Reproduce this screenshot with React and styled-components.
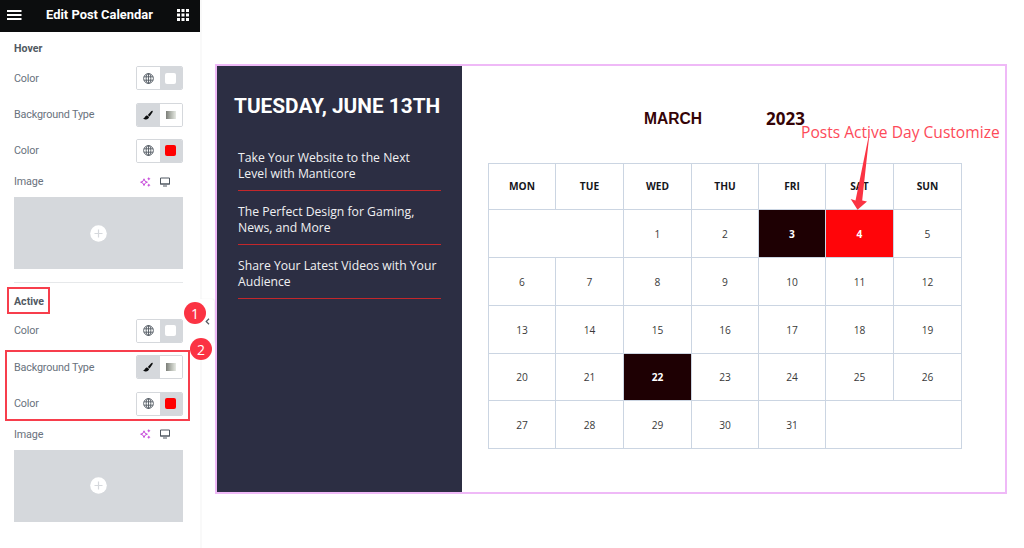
import styled, { createGlobalStyle } from "styled-components";

const GlobalStyle = createGlobalStyle`
	* {
		box-sizing: border-box;
	}

	body {
		margin: 0;
		background: #fff;
		font-family: Roboto, "Liberation Sans", sans-serif;
	}

	svg {
		display: block;
		flex: none;
	}
`;

const Page = styled.div`
	position: relative;
	display: flex;
	width: 1024px;
	height: 548px;
	overflow: hidden;
	background: #fff;
`;

const Sidebar = styled.aside`
	width: 200px;
	height: 100%;
	background: #fff;
`;

const TopBar = styled.header`
	display: flex;
	align-items: center;
	justify-content: space-between;
	height: 32px;
	padding: 0 11px 3px 7px;
	background: #0c0d0e;
	color: #fff;

	h1 {
		margin: 0;
		font-size: 12.9px;
		font-weight: 700;
		line-height: 16px;
	}
`;

const Section = styled.section`
	height: 252px;
	margin: 0 17px 0 14px;
	padding-top: 4px;

	& + & {
		margin-top: -2px;
		height: 254px;
		padding-top: 5.6px;
		border-top: 1px solid #e6e8ea;
	}
`;

const SectionTitle = styled.h2`
	margin: 0;
	height: 24px;
	font-size: 10.6px;
	font-weight: 700;
	line-height: 25px;
	color: #515962;
`;

const Control = styled.div`
	display: flex;
	align-items: center;
	justify-content: space-between;
	height: ${({ $short }) => ($short ? "25px" : "36.4px")};
	margin-bottom: ${({ $short }) => ($short ? "3px" : "0")};
	font-size: 10.8px;
	letter-spacing: -0.17px;
	color: #69727d;
`;

const Choices = styled.div`
	display: flex;
	width: 47px;
	height: 24px;
	border: 1px solid #d5d8dc;
	border-radius: 2px;
	overflow: hidden;
`;

const Choice = styled.span`
	display: flex;
	flex: 1;
	align-items: center;
	justify-content: center;
	background: ${({ $active }) => ($active ? "#d5d8dc" : "#fff")};
`;

const Swatch = styled.i`
	width: 11px;
	height: 11px;
	border-radius: 2px;
	background: ${({ $color }) => $color};
`;

const Gradient = styled.i`
	width: 10px;
	height: 8px;
	background: linear-gradient(to right, #7b7d78, #b4b8b0 50%, #e6e9e3);
`;

const Tools = styled.div`
	display: flex;
	align-items: center;
	gap: 9px;
	margin-right: 13px;
`;

const ImagePicker = styled.div`
	display: flex;
	align-items: center;
	justify-content: center;
	height: 72px;
	background: #d5d8dc;
`;

const Canvas = styled.main`
	flex: 1;
	padding: 64px 17px 0 13px;
	border-left: 2px solid #f9f9f9;
`;

const Widget = styled.div`
	display: flex;
	width: 792px;
	height: 430px;
	border: 2px solid #efb9f7;
`;

const Posts = styled.section`
	width: 245px;
	padding: 27px 21px 0 21px;
	background: #2c2e43;
	color: #f0f0f2;

	h2 {
		margin: 0 -4px 30px;
		font-size: 20.8px;
		font-weight: 700;
		line-height: 26px;
		white-space: nowrap;
		color: #fff;
	}
`;

const Post = styled.p`
	height: 42px;
	margin: 0 0 12px;
	padding-top: 1px;
	border-bottom: 1px solid #c3272b;
	font: 12.2px/16px "Open Sans", sans-serif;
	white-space: nowrap;
`;

const Calendar = styled.section`
	flex: 1;
	padding: 42px 0 0 26px;
`;

const Month = styled.div`
	display: flex;
	height: 22px;
	margin-bottom: 33px;
	padding-left: 156px;
	color: #350407;
	line-height: 22px;
	font-weight: 700;

	strong {
		width: 122px;
		font-size: 15.6px;
		font-family: "Liberation Sans", sans-serif;
	}

	span {
		font: 700 17px/22px "Open Sans", sans-serif;
	}
`;

const Days = styled.div`
	display: grid;
	width: 474px;
	grid-template-columns: 67px 68px 68px 67px 67px 68px 68px;
	grid-template-rows: 46px 48px 48px 48px 47px 48px;
	border-top: 1px solid #cbd5e2;
	border-left: 1px solid #cbd5e2;
`;

const Day = styled.div`
	display: flex;
	align-items: center;
	justify-content: center;
	grid-column: span ${({ $span }) => $span || 1};
	border-right: 1px solid #cbd5e2;
	border-bottom: 1px solid #cbd5e2;
	background: ${({ $fill }) => $fill || "#fff"};
	color: ${({ $fill }) => ($fill ? "#fff" : "#3a3a3a")};
	font: ${({ $fill }) => ($fill ? 700 : 400)} 10.2px "Open Sans", sans-serif;
`;

const WeekDay = styled(Day)`
	padding-bottom: 2px;
	font-weight: 700;
	color: #16161c;
`;

const Outline = styled.div`
	position: absolute;
	top: ${({ $top }) => $top}px;
	left: ${({ $left }) => $left}px;
	width: ${({ $width }) => $width}px;
	height: ${({ $height }) => $height}px;
	border: 2px solid #f73e4c;
`;

const Badge = styled.span`
	position: absolute;
	top: ${({ $top }) => $top}px;
	left: ${({ $left }) => $left}px;
	width: 22px;
	height: 22px;
	border-radius: 50%;
	background: #fb3343;
	color: #fff;
	font: 14px/23px "Open Sans", sans-serif;
	text-align: center;
`;

const Collapse = styled.span`
	position: absolute;
	top: 299px;
	left: 200px;
	display: flex;
	align-items: center;
	justify-content: center;
	width: 14px;
	height: 44px;
	border-radius: 0 3px 3px 0;
	background: #fff;
	box-shadow: 1px 0 2px rgba(0, 0, 0, 0.06);
`;

const Note = styled.span`
	position: absolute;
	top: 121px;
	left: 801px;
	color: #fd4a59;
	font: 15.6px/22px "Open Sans", sans-serif;
	white-space: nowrap;
`;

const Arrow = styled.svg`
	position: absolute;
	top: 134px;
	left: 848px;
`;

const MenuIcon = () => (
	<svg width="15" height="12" viewBox="0 0 15 12" fill="#fff">
		<path d="M0 1h14.5v2H0zM0 5h14.5v2H0zM0 9h14.5v2H0z" />
	</svg>
);

const GridIcon = () => (
	<svg width="12" height="12" viewBox="0 0 12 12" fill="#fff">
		{[0, 4.5, 9].map((y) =>
			[0, 4.5, 9].map((x) => <rect key={`${x}-${y}`} x={x} y={y} width="3" height="3" />)
		)}
	</svg>
);

const GlobeIcon = () => (
	<svg width="11" height="11" viewBox="0 0 11 11" fill="none" stroke="#515962" strokeWidth="0.9">
		<circle cx="5.5" cy="5.5" r="4.9" />
		<ellipse cx="5.5" cy="5.5" rx="2.3" ry="4.9" />
		<path d="M1 3.8h9M1 7.2h9M5.5 .6v9.8" />
	</svg>
);

const BrushIcon = () => (
	<svg width="10" height="10" viewBox="0 0 10 10" fill="#0c0d0e">
		<path d="M9.5.8c.4.4.3.900 0 1.400L6.600 6.500 4.800 5.100 8.200 1.200C8.600.7 9.100.5 9.500.8zM4.200 5.500l1.900 1.500C5.800 8.900 4.100 9.600 2.400 9.400 1.300 9.300.5 8.800.2 8c1 .2 1.400-.2 1.700-.9.4-1 1.200-1.600 2.300-1.600z" />
	</svg>
);

const SparkIcon = () => (
	<svg width="11" height="10" viewBox="0 0 11 10">
		<path
			d="M4 1.800L5 4.200 7.400 5.200 5 6.200 4 8.600 3 6.200.6 5.200 3 4.200z"
			fill="none"
			stroke="#c84ddb"
			strokeWidth="1"
		/>
		<path
			d="M8.800.1l.6 1.100 1.100.6-1.100.6-.6 1.100-.6-1.100-1.100-.6 1.100-.6zM8.800 6.500l.6 1.100 1.100.6-1.100.6-.6 1.100-.6-1.100-1.100-.6 1.100-.6z"
			fill="#c84ddb"
		/>
	</svg>
);

const DesktopIcon = () => (
	<svg width="10" height="10" viewBox="0 0 10 10">
		<path d="M.5 1h9v6h-9z" fill="none" stroke="#515962" />
		<path d="M0 6.400h10V7.500H0zM3 8.500h4v1H3z" fill="#515962" />
	</svg>
);

const PlusIcon = () => (
	<svg width="17" height="17" viewBox="0 0 17 17">
		<circle cx="8.5" cy="8.5" r="8.3" fill="#fff" />
		<path d="M8.500 4.500v8M4.500 8.500h8" stroke="#d5d8dc" strokeWidth="1.2" />
	</svg>
);

const ColorControl = ({ color }) => (
	<Control>
		Color
		<Choices>
			<Choice>
				<GlobeIcon />
			</Choice>
			<Choice $active>
				<Swatch $color={color} />
			</Choice>
		</Choices>
	</Control>
);

const StyleSection = ({ title }) => (
	<Section>
		<SectionTitle>{title}</SectionTitle>
		<ColorControl color="#fff" />
		<Control>
			Background Type
			<Choices>
				<Choice $active>
					<BrushIcon />
				</Choice>
				<Choice>
					<Gradient />
				</Choice>
			</Choices>
		</Control>
		<ColorControl color="#ff0000" />
		<Control $short>
			Image
			<Tools>
				<SparkIcon />
				<DesktopIcon />
			</Tools>
		</Control>
		<ImagePicker>
			<PlusIcon />
		</ImagePicker>
	</Section>
);

const weekDays = ["MON", "TUE", "WED", "THU", "FRI", "SAT", "SUN"];
const days = Array.from({ length: 31 }, (_, i) => i + 1);
const fills = { 3: "#1e0003", 4: "#ff0509", 22: "#1e0003" };

const App = () => {
	return (
		<Page>
			<GlobalStyle />
			<Sidebar>
				<TopBar>
					<MenuIcon />
					<h1>Edit Post Calendar</h1>
					<GridIcon />
				</TopBar>
				<StyleSection title="Hover" />
				<StyleSection title="Active" />
			</Sidebar>
			<Canvas>
				<Widget>
					<Posts>
						<h2>TUESDAY, JUNE 13TH</h2>
						<Post>
							Take Your Website to the Next
							<br />
							Level with Manticore
						</Post>
						<Post>
							The Perfect Design for Gaming,
							<br />
							News, and More
						</Post>
						<Post>
							Share Your Latest Videos with Your
							<br />
							Audience
						</Post>
					</Posts>
					<Calendar>
						<Month>
							<strong>MARCH</strong>
							<span>2023</span>
						</Month>
						<Days>
							{weekDays.map((name) => (
								<WeekDay key={name}>{name}</WeekDay>
							))}
							<Day $span={2} />
							{days.map((day) => (
								<Day key={day} $fill={fills[day]}>
									{day}
								</Day>
							))}
							<Day $span={2} />
						</Days>
					</Calendar>
				</Widget>
			</Canvas>
			<Collapse>
				<svg width="5" height="7" viewBox="0 0 5 7" fill="none" stroke="#515962" strokeWidth="1.2">
					<path d="M4 .8L1.200 3.500 4 6.200" />
				</svg>
			</Collapse>
			<Outline $top={287} $left={7} $width={43} $height={27} />
			<Outline $top={350} $left={5} $width={185} $height={71} />
			<Badge $top={302} $left={184}>1</Badge>
			<Badge $top={338} $left={190}>2</Badge>
			<Note>Posts Active Day Customize</Note>
			<Arrow width="22" height="78" viewBox="0 0 22 78" fill="#fb3343">
				<path d="M20.500 3L21 4 14.200 66.500l4.800 1L9.500 75.700 2.700 65 7.500 66.500z" />
			</Arrow>
		</Page>
	);
};

export default App;
